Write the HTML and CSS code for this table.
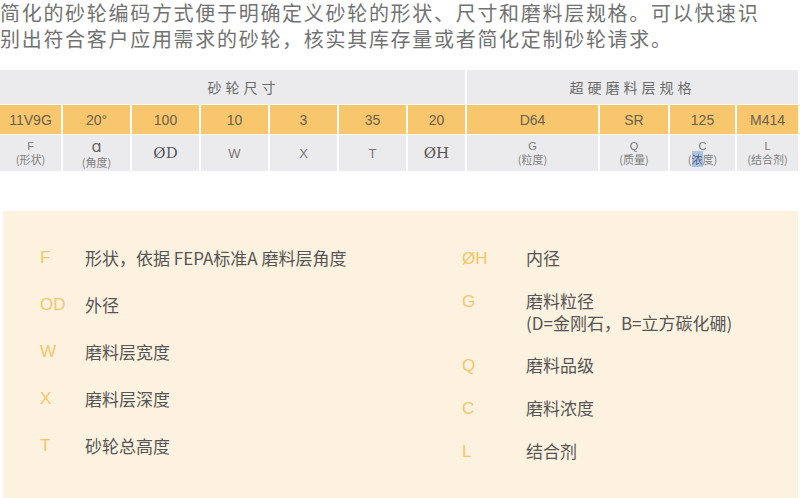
FILE: index.html
```html
<!DOCTYPE html>
<html lang="zh">
<head>
<meta charset="utf-8">
<link rel="stylesheet" href="styles.css">
</head>
<body>
<p class="intro">简化的砂轮编码方式便于明确定义砂轮的形状、尺寸和磨料层规格。可以快速识别出符合客户应用需求的砂轮，核实其库存量或者简化定制砂轮请求。</p>

<div class="spec">
  <div class="cell head head-left">砂轮尺寸</div>
  <div class="cell head head-right">超硬磨料层规格</div>

  <div class="cell val">11V9G</div>
  <div class="cell val">20°</div>
  <div class="cell val">100</div>
  <div class="cell val">10</div>
  <div class="cell val">3</div>
  <div class="cell val">35</div>
  <div class="cell val">20</div>
  <div class="cell val">D64</div>
  <div class="cell val">SR</div>
  <div class="cell val">125</div>
  <div class="cell val">M414</div>

  <div class="cell key"><span class="k">F</span><span class="sub">(形状)</span></div>
  <div class="cell key"><span class="alpha">ɑ</span><span class="sub">(角度)</span></div>
  <div class="cell key"><span class="dia">ØD</span></div>
  <div class="cell key"><span class="plain">W</span></div>
  <div class="cell key"><span class="plain">X</span></div>
  <div class="cell key"><span class="plain">T</span></div>
  <div class="cell key"><span class="dia">ØH</span></div>
  <div class="cell key"><span class="k">G</span><span class="sub">(粒度)</span></div>
  <div class="cell key"><span class="k">Q</span><span class="sub">(质量)</span></div>
  <div class="cell key"><span class="k">C</span><span class="sub">(<span class="sel">浓</span>度)</span></div>
  <div class="cell key"><span class="k">L</span><span class="sub">(结合剂)</span></div>
</div>

<div class="legend">
  <div class="col col-left">
    <div class="item"><span class="letter">F</span><span class="desc">形状，依据 FEPA标准A 磨料层角度</span></div>
    <div class="item"><span class="letter">OD</span><span class="desc">外径</span></div>
    <div class="item"><span class="letter">W</span><span class="desc">磨料层宽度</span></div>
    <div class="item"><span class="letter">X</span><span class="desc">磨料层深度</span></div>
    <div class="item"><span class="letter">T</span><span class="desc">砂轮总高度</span></div>
  </div>
  <div class="col col-right">
    <div class="item"><span class="letter">ØH</span><span class="desc">内径</span></div>
    <div class="item"><span class="letter">G</span><span class="desc">磨料粒径<br>(D=金刚石，B=立方碳化硼)</span></div>
    <div class="item"><span class="letter">Q</span><span class="desc">磨料品级</span></div>
    <div class="item"><span class="letter">C</span><span class="desc">磨料浓度</span></div>
    <div class="item"><span class="letter">L</span><span class="desc">结合剂</span></div>
  </div>
</div>
</body>
</html>
```
FILE: styles.css
```css
html, body {
  margin: 0;
  padding: 0;
  background: #ffffff;
  width: 800px;
  height: 498px;
  overflow: hidden;
}

body {
  font-family: "Liberation Sans", "Noto Sans CJK SC", sans-serif;
  color: #666666;
}

.intro {
  margin: 0 0 18px 0;
  width: 770px;
  font-family: "Noto Sans CJK SC", sans-serif;
  font-size: 20px;
  line-height: 26px;
  letter-spacing: 1.7px;
  color: #727272;
}

.spec {
  display: grid;
  width: 798px;
  grid-template-columns: 61px 67px 67px 67px 67px 67px 57px 131px 68px 65px 61px;
  grid-template-rows: 34px 29px 36px;
  column-gap: 2px;
  row-gap: 1px;
  background: #ffffff;
}

.cell {
  display: flex;
  flex-direction: column;
  align-items: center;
  justify-content: center;
  background: #ebebed;
}

.head {
  font-family: "Noto Sans CJK SC", sans-serif;
  font-size: 14px;
  letter-spacing: 4px;
  color: #6a6a6a;
}

.head-left {
  grid-column: span 7;
  padding-left: 22px;
}

.head-right {
  grid-column: span 4;
}

.val {
  background: #f8c66c;
  font-size: 14px;
  color: #6b6050;
}

.key {
  color: #777777;
}

.k {
  font-size: 11px;
  line-height: 12px;
}

.sub {
  font-family: "Noto Sans CJK SC", sans-serif;
  font-size: 11px;
  line-height: 14px;
  color: #808080;
}

.sel {
  background: #a9c3e6;
  color: #556070;
}

.alpha {
  font-family: "DejaVu Sans", sans-serif;
  font-size: 16px;
  line-height: 17px;
  color: #666666;
}

.dia {
  font-family: "DejaVu Serif", serif;
  font-size: 15px;
  color: #555555;
}

.plain {
  font-size: 13px;
  color: #777777;
}

.legend {
  margin: 40px 2px 0 3px;
  height: 287px;
  background: #fdf2df;
  display: flex;
  padding: 35px 0 0 37px;
  box-sizing: border-box;
}

.col {
  display: flex;
  flex-direction: column;
}

.col-left {
  width: 422px;
  gap: 24px;
}

.col-right {
  gap: 20px;
  padding-top: 1px;
}

.item {
  display: flex;
  align-items: flex-start;
}

.letter {
  font-family: "Liberation Sans", sans-serif;
  font-size: 17px;
  line-height: 23px;
  color: #f6c66a;
}

.col-left .letter {
  width: 45px;
}

.col-right .letter {
  width: 64px;
}

.desc {
  font-family: "Noto Sans CJK SC", sans-serif;
  font-size: 17px;
  line-height: 23px;
  color: #555555;
}

.col-right .desc {
  line-height: 22px;
}
```
